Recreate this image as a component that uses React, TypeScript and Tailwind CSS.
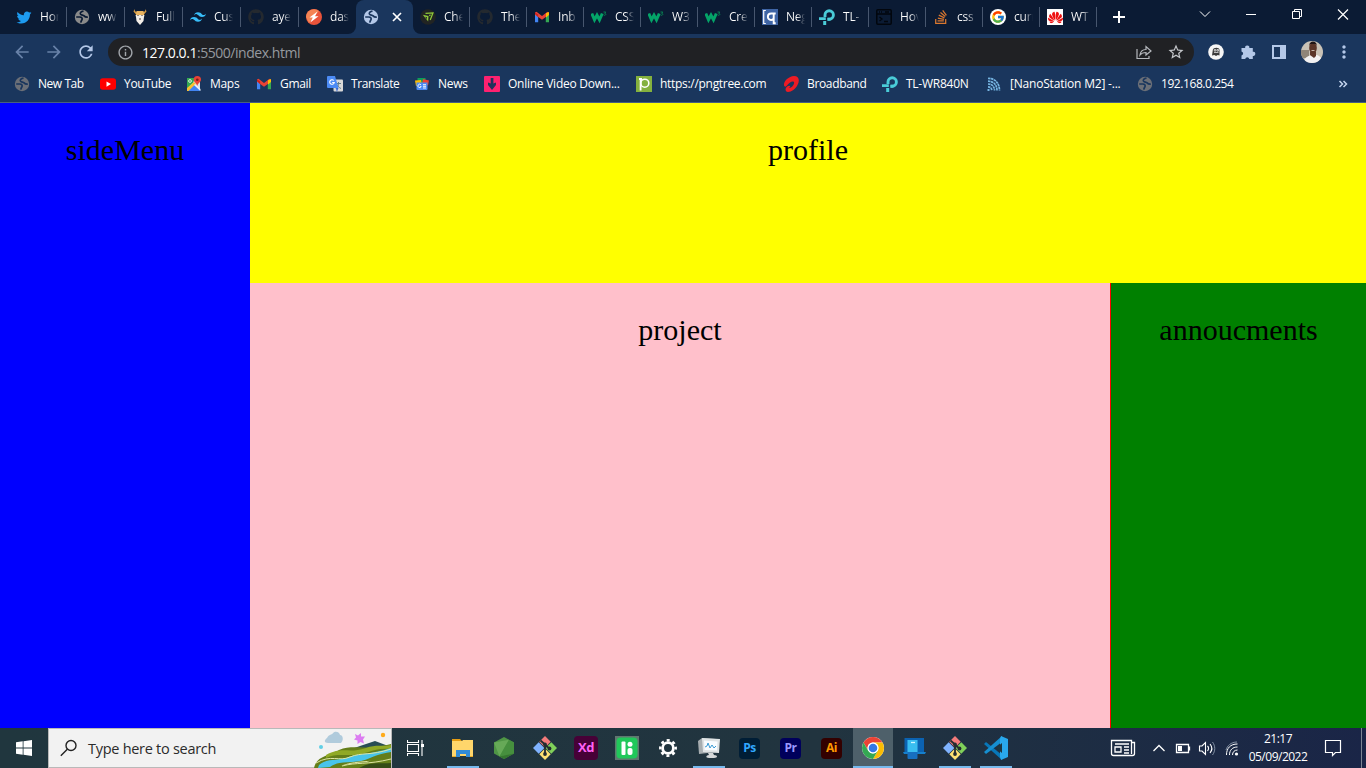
import React, { ReactNode } from "react";
import { FaGithub, FaStackOverflow, FaTwitter } from "react-icons/fa";
import { FcGoogle } from "react-icons/fc";
import { SiHuawei, SiTailwindcss } from "react-icons/si";
import { MdArrowBack, MdArrowForward, MdInfoOutline, MdMoreVert, MdRefresh, MdStarBorder } from "react-icons/md";

const S = ({ children, box = "0 0 16 16", c = "h-4 w-4" }: { children: ReactNode; box?: string; c?: string }) => (
  <svg viewBox={box} className={`shrink-0 ${c}`} fill="none">{children}</svg>
);

const Globe = ({ c = "text-[#8a8a8a]", land = "#0b1b34" }: { c?: string; land?: string }) => (
  <S c={`h-4 w-4 ${c}`}>
    <circle cx="8" cy="8" r="7.200" fill="currentColor" />
    <path d="M9.500 2.200C7 2.600 5.600 4 6.600 5.300c.9 1.100 2.600.5 3.500 1.600.8 1 2.200 1.300 3.700 1.200" stroke={land} strokeWidth="1.700" />
    <path d="M2.200 8h3.600c2 .1 2.500 1.100 2.300 2.300-.2 1-1 1.300-1.300 3.400" stroke={land} strokeWidth="1.700" />
  </S>
);

const Gmail = () => (
  <S>
    <path d="M1 4v9.200h3.200V7z" fill="#4285f4" />
    <path d="M15 4v9.200h-3.200V7z" fill="#34a853" />
    <path d="M1 3.500 2.500 2.700 8 7l5.500-4.300L15 3.800 11.800 8 8 10.800 4.200 8 1 5.800z" fill="#ea4335" />
    <path d="M12 4.200 15 3v3l-3 2.500z" fill="#fbbc04" />
    <path d="M1 5v-1.500L4.200 5.500V8.300z" fill="#c5221f" />
  </S>
);
const TpLink = () => (
  <S>
    <path d="M6 8V6a4.200 4.200 0 1 1 4.200 4.200H8.500" stroke="#4accd8" strokeWidth="2.900" />
    <path d="M0 8.200h6.800V11H0zM4.200 12h3v4h-3z" fill="#4accd8" />
    <path d="M8.500 8.800h3v2.900h-3z" fill="#4accd8" />
  </S>
);
const W3 = () => (
  <S>
    <path d="M.8 4.500 3.500 10.800 6 6.200 8.500 10.800 11.300 4.500" stroke="#04a468" strokeWidth="3" />
    <path d="M12.500 3h2.300l-1.100 1.400c1.800.1 1.400 2.200-.9 1.900" stroke="#087d50" strokeWidth="1" />
  </S>
);
const Goat = () => (
  <S>
    <path d="M2.500 0c0 2 1 3 3 3.500h5c2-.5 3-1.500 3-3.500l1 2.500-3 3.500h-7L1.500 2.500z" fill="#d59a42" />
    <path d="M4.500 2h7l.8 5h-8.600z" fill="#e9b35f" />
    <path d="M3.700 6h8.600l-.8 6L8 16l-3.500-4z" fill="#f3eee8" />
    <path d="M5.500 6h1v1h-1zM9.500 6h1v1h-1zM7 9.500h2v1H7z" fill="#45352f" />
  </S>
);
const Bolt = () => (
  <S>
    <circle cx="8" cy="8" r="8" fill="#e9533a" /><path d="M0 8a8 8 0 0 1 13-6L3 14z" fill="#f48454" />
    <path d="m11.500 2.500-8 6h3.300l-2.500 5 8.200-6.200H9z" fill="#fff" />
  </S>
);
const Chevrons = () => (
  <S>
    <circle cx="8" cy="8" r="7.800" fill="#222423" />
    <path d="M2.800 5.800 8.500 7 8.200 12.500z" fill="#8fc93a" /><path d="m5 7.800 2 .5v2z" fill="#222423" />
    <path d="M5.500 4.300 13 3.800 10.200 11M9.300 6.800l1.200-1" stroke="#8fc93a" strokeWidth="1.200" />
  </S>
);
const QLetter = () => (
  <S>
    <path d="M0 0h16v16H0z" fill="#3f65a5" />
    <path d="M3.800 1.500H1.700v13h2.100" stroke="#fff" strokeWidth="1.200" />
    <path d="M13.700 4.500H9.200C4.800 4.500 4.800 11 9 11c1.800 0 2.700-.8 2.700-2.500V5v9.300h2" stroke="#fff" strokeWidth="1.900" />
  </S>
);
const Terminal = () => (
  <S><rect x=".8" y=".8" width="14.400" height="14.400" rx="1" stroke="#02060d" strokeWidth="1.500" /><path d="M1 5h14M3 3h1m1 0h1m3 0h4M3.500 8 6 10l-2.500 2M8 12.500h4" stroke="#02060d" strokeWidth="1.300" /></S>
);
const GoogleG = () => <span className="grid h-4 w-4 shrink-0 place-items-center rounded-full bg-white"><FcGoogle className="h-[14px] w-[14px]" /></span>;
const Huawei = () => <span className="grid h-4 w-4 shrink-0 place-items-center bg-white"><SiHuawei className="h-[15px] w-[15px] text-[#ee1111]" /></span>;
const YouTube = () => <S><rect y="2.300" width="16" height="11.500" rx="2.800" fill="#ff0000" /><path d="m6.500 5.500 4.500 2.600-4.500 2.600z" fill="#fff" /></S>;
const Maps = () => (
  <S>
    <path d="M1 2h13v13H1z" fill="#d9e1e6" /><path d="M1 2h8l-2 5-6 6z" fill="#35a853" />
    <path d="m1 12 7-6 2 2-7 7H1z" fill="#fbc02d" /><path d="m2.500 15 6-6 6 6z" fill="#4184f3" /><path d="m9 8 5.500 5v2L8 9z" fill="#edf0f2" />
    <circle cx="4" cy="5" r="1.400" stroke="#fff" strokeWidth=".8" />
    <path d="M11.300 0A3.700 3.700 0 0 0 7.700 3.700c0 2.500 2.800 3 3.500 6.300.8-3.300 3.800-3.800 3.800-6.300A3.700 3.700 0 0 0 11.300 0" fill="#ea4335" /><circle cx="11.300" cy="3.700" r="1.300" fill="#7d1f19" />
  </S>
);
const Translate = () => (
  <S>
    <rect x="6.500" y="3.500" width="9.500" height="12" rx="1" fill="#d8d8d8" /><path d="M8.500 7.500H14M11.500 6v1.500c0 2-1 3.500-2.500 5M10 8.500c1 2 2 3 4 4" stroke="#607d8b" />
    <path d="M1 0h7l3.500 12H1a1 1 0 0 1-1-1V1a1 1 0 0 1 1-1" fill="#4c8bf5" /><path d="M9 12h2.500L9.800 16z" fill="#3367d6" />
    <path d="M6.800 4.500a2.300 2.300 0 1 0 .5 2H5.200" stroke="#fff" strokeWidth="1.100" />
  </S>
);
const News = () => (
  <S>
    <path d="M3.500 2h8v5h-8z" fill="#0f9d58" /><path d="m1 4.500 6-.5 1 5-6 1z" fill="#fbbc04" /><path d="m9 3 6 1.500-1 5L8 8z" fill="#ea4335" />
    <path d="M2.500 6.500h11v6.500a1 1 0 0 1-1 1h-9a1 1 0 0 1-1-1z" fill="#4c8bf5" /><path d="M7 8.900a1.700 1.700 0 1 0 .2 1.700H6M9 8.700h3M9 10.300h3M9 12h3" stroke="#fff" strokeWidth=".9" />
  </S>
);
const Video = () => <S><rect width="16" height="16" rx="1" fill="#fe2170" /><path d="M6.700 2h2.700v5.500L12 6.500v2.500l-4 5-4-5V6.500l2.700 1z" fill="#20325b" /></S>;
const Pngtree = () => <S><path d="M0 0h16v16H0z" fill="#84b13e" /><circle cx="8.800" cy="7.200" r="4" stroke="#fff" strokeWidth="1.600" /><path d="M4.600 3v11.500M3 3h3" stroke="#fff" strokeWidth="1.800" /></S>;
const Airtel = () => <S><path d="M1 9.500C.5 5 5.500.5 11 0c5 0 6 4.500 3.500 9-2 4-6 7-9.500 7-3.500-.4-3.300-5.200 1-6.200 1.700-.1 1.500 1.700-.3 2.300 3 .3 6.300-4.600 5.200-6.200C9.500 4.500 6 6.500 4 9.500c-1.200 1.500-2.500 1.500-3 0" fill="#ed1b24" /></S>;
const Nano = () => (
  <S><path d="M2 2.500c6.500-.5 11.500 4.500 11.500 12M2 5.200c5.500 0 9 3.500 9 9.300M2 8c3.800 0 6.500 2.500 6.500 6.500M2 10.800c2.300 0 3.800 1.500 3.800 3.700" stroke="#76b5e2" strokeWidth="1.700" strokeDasharray="2.500 .5" /><path d="M1.500 13h2v2h-2z" fill="#76b5e2" /></S>
);

const tabs: { icon: ReactNode; text: string; kind?: "active" | "plain" }[] = [
  { icon: <FaTwitter className="h-[15px] w-4 shrink-0 text-[#1d9bf0]" />, text: "Hor" },
  { icon: <Globe />, text: "ww" },
  { icon: <Goat />, text: "Full" },
  { icon: <SiTailwindcss className="h-4 w-4 shrink-0 text-[#38bdf8]" />, text: "Cus" },
  { icon: <FaGithub className="h-4 w-4 shrink-0 text-[#24292f]" />, text: "aye" },
  { icon: <Bolt />, text: "das", kind: "plain" },
  { icon: <Globe c="text-[#b4c8e8]" land="#1a365d" />, text: "", kind: "active" },
  { icon: <Chevrons />, text: "Che" },
  { icon: <FaGithub className="h-4 w-4 shrink-0 text-[#24292f]" />, text: "The" },
  { icon: <Gmail />, text: "Inb" },
  { icon: <W3 />, text: "CSS" },
  { icon: <W3 />, text: "W3" },
  { icon: <W3 />, text: "Cre" },
  { icon: <QLetter />, text: "Neg" },
  { icon: <TpLink />, text: "TL-" },
  { icon: <Terminal />, text: "Hov" },
  { icon: <FaStackOverflow className="h-4 w-4 shrink-0 text-[#d9772f]" />, text: "css" },
  { icon: <GoogleG />, text: "curr" },
  { icon: <Huawei />, text: "WT" },
];

const uiFont = "font-['Segoe_UI','Open_Sans','Noto_Sans',sans-serif]";

function TabStrip() {
  return (
    <div className="flex h-[34px] bg-[#0b1b34] pl-[9px]">
      {tabs.map((t, i) => {
        const size = i < 5 ? "w-[58px]" : "w-[57px]";
        if (t.kind === "active")
          return (
            <div key={i} className={`relative flex h-full items-center rounded-t-lg bg-[#1a365d] pl-[7px] ${size}`}>
              {t.icon}
              <svg viewBox="0 0 10 10" className="ml-[13px] h-[10px] w-[10px]"><path d="m1 1 8 8M9 1 1 9" stroke="#fff" strokeWidth="1.700" /></svg>
              <svg viewBox="0 0 8 8" className="absolute bottom-0 -left-2 h-2 w-2"><path d="M8 0v8H0a8 8 0 0 0 8-8" fill="#1a365d" /></svg>
              <svg viewBox="0 0 8 8" className="absolute -right-2 bottom-0 h-2 w-2"><path d="M0 0v8h8a8 8 0 0 1-8-8" fill="#1a365d" /></svg>
            </div>
          );
        return (
          <div key={i} className={`flex h-full shrink-0 items-center ${size}`}>
            <div className={`flex h-5 w-full items-center gap-2 pl-[7px] ${t.kind === "plain" ? "" : "border-r border-[#47566e]"}`}>
              {t.icon}
              <span className="w-[19px] overflow-hidden bg-gradient-to-r from-white from-55% to-transparent bg-clip-text text-[12px] leading-5 tracking-[-0.2px] whitespace-nowrap text-transparent">{t.text}</span>
            </div>
          </div>
        );
      })}
      <svg viewBox="0 0 269 34" className="h-[34px] w-[269px]" fill="none" stroke="#fff">
        <path d="M22 11v12M16 17h12" strokeWidth="2" />
        <path d="m103 11.500 5 5 5-5" strokeWidth="1" /><path d="M149 14.500h10" />
        <path d="M195.500 11.500h7v7h-7zM197.500 11.500v-2h7v7h-2" /><path d="m241 9.500 10 10M251 9.500l-10 10" strokeWidth="1.200" />
      </svg>
    </div>
  );
}

function AddressBar() {
  return (
    <div className="flex h-9 items-center text-[#b4c8e8]">
      <div className="flex w-[108px] shrink-0 items-center gap-3 pl-3">
        <MdArrowBack className="h-5 w-5 text-[#6882a8]" /><MdArrowForward className="h-5 w-5 text-[#6882a8]" /><MdRefresh className="h-5 w-5" />
      </div>
      <div className="flex h-7 w-[1086px] shrink-0 items-center rounded-full bg-[#202124] pr-[9px] pl-[9px]">
        <MdInfoOutline className="h-[17px] w-[17px] text-[#a2a6ab]" />
        <p className="ml-2 text-[14px] tracking-[-0.46px] text-[#969a9f]"><span className="text-white">127.0.0.1</span>:5500/index.html</p>
        <svg viewBox="0 0 16 16" className="ml-auto h-4 w-4" fill="none" stroke="#b5b8bd" strokeWidth="1.200"><path d="M1 5v9.500h12V12M4 11c.5-4 3-5.500 6-5.500V2.500L15 7l-5 4V8.500c-3 0-4.500.5-6 2.500Z" /></svg>
        <MdStarBorder className="ml-[15px] h-[18px] w-[18px] text-[#c4c7cb]" />
      </div>
      <S c="ml-[14px] h-4 w-4">
        <circle cx="8" cy="8" r="7.800" fill="#f6f6f6" />
        <path d="M4 11.500 4.800 6C5.200 3 11.500 2.800 11.500 6v5.500L9.800 11 8 12l-1.700-1z" fill="#3b3b3b" />
        <path d="M6.300 5.500h1.500v1.600H6.300zM9 5.500h1.500v1.600H9zM6 8.500h4.500" stroke="#f6f6f6" strokeWidth=".7" />
      </S>
      <S c="ml-4 h-4 w-4"><path d="M1.500 4h3.700a2.100 2.100 0 1 1 4.100 0h3.500v3.800a2.100 2.100 0 1 1 0 4.100V15H9.300a2.100 2.100 0 0 0-4.100 0H1.500v-3.500a2.100 2.100 0 0 0 0-4.100z" fill="currentColor" /></S>
      <S c="ml-4 h-[14px] w-[14px]" box="0 0 14 14"><path d="M0 0h14v14H0zM2 2v10h6V2z" fill="currentColor" fillRule="evenodd" /></S>
      <S c="ml-[15px] h-[22px] w-[22px] rounded-full" box="0 0 22 22">
        <path d="M0 0h22v22H0z" fill="#c9c2b6" /><path d="M0 9h8v8H0z" fill="#8f8578" /><path d="M3 22c0-5 3-7 8-8l5 0c3 1 5 3 6 8z" fill="#f2f1f2" />
        <path d="m9 11 6 0v4l-2 2-4-3z" fill="#5c3529" /><ellipse cx="12" cy="7" rx="3.800" ry="5.500" fill="#5b3527" /><path d="M8 5c0-6 8-6 8 0l-1-2H9z" fill="#211615" /><path d="M10.500 9.500h3" stroke="#ded2c8" strokeWidth=".8" />
      </S>
      <MdMoreVert className="ml-[11px] h-5 w-5" />
    </div>
  );
}

const bookmarks: { icon: ReactNode; text: string; cell: string; track: string }[] = [
  { icon: <Globe c="text-[#6b6f77]" land="#1a365d" />, text: "New Tab", cell: "w-[86px]", track: "tracking-[-0.45px]" },
  { icon: <YouTube />, text: "YouTube", cell: "w-[86px]", track: "tracking-[-0.3px]" },
  { icon: <Maps />, text: "Maps", cell: "w-[70px]", track: "tracking-[-0.3px]" },
  { icon: <Gmail />, text: "Gmail", cell: "w-[71px]", track: "tracking-[-0.3px]" },
  { icon: <Translate />, text: "Translate", cell: "w-[87px]", track: "tracking-[-0.4px]" },
  { icon: <News />, text: "News", cell: "w-[70px]", track: "tracking-[-0.3px]" },
  { icon: <Video />, text: "Online Video Down...", cell: "w-[152px]", track: "tracking-[-0.25px]" },
  { icon: <Pngtree />, text: "https://pngtree.com", cell: "w-[147px]", track: "tracking-[-0.3px]" },
  { icon: <Airtel />, text: "Broadband", cell: "w-[99px]", track: "tracking-[-0.35px]" },
  { icon: <TpLink />, text: "TL-WR840N", cell: "w-[104px]", track: "tracking-[-0.25px]" },
  { icon: <Nano />, text: "[NanoStation M2] -...", cell: "w-[151px]", track: "tracking-[-0.2px]" },
  { icon: <Globe c="text-[#6b6f77]" land="#1a365d" />, text: "192.168.0.254", cell: "w-[150px]", track: "tracking-[-0.43px]" },
];

function Bookmarks() {
  return (
    <div className="flex h-[33px] items-center border-b border-[#48607f] pb-[5px] pl-[14px] text-[12px] text-white">
      {bookmarks.map((b) => (
        <div key={b.text} className={`flex shrink-0 items-center gap-2 whitespace-nowrap ${b.cell}`}>{b.icon}<span className={b.track}>{b.text}</span></div>
      ))}
      <svg viewBox="0 0 10 8" className="mr-[18px] ml-auto h-2 w-[10px]" fill="none" stroke="#c3d4ee" strokeWidth="1.500"><path d="m1.500 1 3 3-3 3M5.500 1l3 3-3 3" /></svg>
    </div>
  );
}

const T = ({ children }: { children: ReactNode }) => <S box="0 0 24 24" c="h-6 w-6">{children}</S>;
const Git = () => (
  <T>
    <path d="m12 0 5.700 5.700L12 11.400 6.300 5.700z" fill="#f47b7b" /><path d="M5.700 6.300 11.400 12l-5.700 5.700L0 12z" fill="#80b3ff" /><path d="M18.300 6.300 24 12l-5.700 5.700-5.700-5.700z" fill="#80d05a" /><path d="m12 12.600 5.700 5.700L12 24l-5.700-5.700z" fill="#ffe173" />
    <path d="m7.500 4.500 4.500 4v9.500M12 9l4.500 3.500" stroke="#242c30" strokeWidth="1.800" /><circle cx="12" cy="8.500" r="1.900" fill="#242c30" /><circle cx="12" cy="18" r="1.900" fill="#242c30" /><circle cx="16.500" cy="12.500" r="1.900" fill="#242c30" />
  </T>
);
const Explorer = () => <T><path d="M1 3h8l2 2h-10z" fill="#e69d13" /><path d="M1 5h10l1-1h10v16H1z" fill="#ffd66b" /><path d="M5 14h14v7h-4v-3H9v3H5z" fill="#318bd6" /><path d="M1 20h4v1H1zM19 20h3v1h-3z" fill="#e9aa27" /></T>;
const Node = () => <T><path d="m12 1 10 5.500v11L12 23 2 17.500v-11z" fill="#4f9545" /><path d="m2 6.500 15-2.700L7.500 20.500z" fill="#66a957" /><path d="m17 3.800 5 2.700v11L7.500 20.500z" fill="#468f3e" /><path d="m7.500 20.500 14.500-3L12 23z" fill="#35762f" /></T>;
const Green = () => <T><path d="M0 0h24v24H0z" fill="#5f786f" /><rect x="1.500" y="1.500" width="21" height="21" rx="4" fill="#20c85a" /><rect x="6.500" y="5.500" width="4" height="13.500" rx="1" fill="#fff" /><circle cx="15" cy="8.300" r="2.500" fill="#fff" /><rect x="12.500" y="12" width="5" height="7" rx="2" fill="#fff" /></T>;
const Gear = () => <T><circle cx="12" cy="12" r="5.400" stroke="#fff" strokeWidth="2.800" /><circle cx="12" cy="12" r="7.700" stroke="#fff" strokeWidth="2.500" strokeDasharray="3.020 3.020" strokeDashoffset="1.510" /></T>;
const Monitor = () => (
  <T><path d="m1 5 4-3 14 1v13L2 18z" fill="#a7adb0" /><path d="m5 2 18 1-1 14-16-1z" fill="#dfe3e4" /><path d="m7 4.500 13.500 1-.5 9L7.500 14z" fill="#f9fcff" /><path d="m8 11 2-1 1-3 2 5 2-3 2 3 2-2" stroke="#3b9bd4" strokeWidth="1" /><path d="m11 17 5 0 1 2c4 0 4 3 0 3h-5c-4 0-3-3 0-3z" fill="#d5d8d9" /></T>
);
const Chrome = () => (
  <T><circle cx="12" cy="12" r="11" fill="#fff" /><path d="M2.500 6.500A11 11 0 0 1 21.500 6.500H12a5.500 5.500 0 0 0-4.800 8.200z" fill="#ea4335" /><path d="M21.500 6.500A11 11 0 0 1 12 23l4.800-8.300A5.500 5.500 0 0 0 12 6.500z" fill="#fbbc04" /><path d="M12 23A11 11 0 0 1 2.500 6.500l4.700 8.200a5.500 5.500 0 0 0 9.600 0z" fill="#34a853" /><circle cx="12" cy="12" r="5.400" fill="#fff" /><circle cx="12" cy="12" r="4.300" fill="#3478e5" /></T>
);
const Phone = () => <T><path d="M2.500 2H22v15H2.500z" fill="#0b62b1" /><path d="M1 16h7v2H2zM15 16h9l-1 2h-8z" fill="#1680cd" /><path d="M5.500 4h10v18a1 1 0 0 1-1 1h-8a1 1 0 0 1-1-1z" fill="#176fc0" /><path d="M5.500 4h10v12h-10z" fill="#39bdf0" /><path d="M9 6.500h4" stroke="#d0f5ff" strokeWidth="1.300" /></T>;
const VsCode = () => <T><path d="m0 8 2-2 16 13v5z" fill="#0877b9" /><path d="m0 16 2 2L18 6V0z" fill="#168fd1" /><path d="m17 0 7 3v18l-7 3-1-3V3z" fill="#29a8ec" /><path d="M18 7v10l-6-5z" fill="#1d3641" /></T>;
const Adobe = ({ text, c }: { text: string; c: string }) => <span className={`grid place-items-center rounded font-bold tracking-[-0.5px] ${c}`}>{text}</span>;

const apps: { icon: ReactNode; open?: boolean; active?: boolean }[] = [
  { icon: <Explorer />, open: true },
  { icon: <Node /> },
  { icon: <Git /> },
  { icon: <Adobe text="Xd" c="h-6 w-6 bg-[#470137] text-[13px] text-[#ff61f6]" /> },
  { icon: <Green /> },
  { icon: <Gear /> },
  { icon: <Monitor />, open: true },
  { icon: <Adobe text="Ps" c="mr-px h-[21px] w-[21px] bg-[#001e36] text-[12px] text-[#31a8ff]" /> },
  { icon: <Adobe text="Pr" c="mr-px h-[21px] w-[21px] bg-[#00005b] text-[12px] text-[#9999ff]" /> },
  { icon: <Adobe text="Ai" c="mr-px h-[21px] w-[21px] bg-[#330000] text-[12px] text-[#ff9a00]" /> },
  { icon: <Chrome />, active: true },
  { icon: <Phone /> },
  { icon: <Git />, open: true },
  { icon: <VsCode />, open: true },
];

const Landscape = () => (
  <svg viewBox="0 0 77 39" className="ml-auto h-[39px] w-[77px]">
    <path d="M13 9c2-4 5-3 6-5 3-3 7 0 7 2 3 0 4 5 1 8H14c-4 0-4-3-1-5" fill="#b0cbdc" />
    <path d="m41 5 3 1.500 3-2.500 0 3.500 4 0-2 3 1 4-3.500-1.500-3 2 0-3.500-3.500-1 2-2z" fill="#dc7cf1" /><circle cx="69" cy="6" r="2.200" fill="#ffac1c" /><circle cx="7" cy="18" r="2" fill="#61cfe5" />
    <path d="m32 22 14-5 15-5 16 6v20H32z" fill="#294e55" /><path d="M0 39c3-13 14-11 25-18 14-6 25 1 52-6v24z" fill="#647d19" />
    <path d="M12 26c17-9 22-1 40-7 10-4 17-1 25-3v4c-18-2-24 6-39 6-12 0-18-1-26 3" fill="#90a925" />
    <path d="M5 36c8-7 18-4 27-7 10-5 24-3 45-10v4c-12 2-16 4-21 6-14 7-30 1-40 9L4 39z" fill="#48c4ea" />
    <path d="M2 34c15-9 23-1 34-6 12-5 20-1 41-8M24 39c13-8 30-5 53-9" fill="none" stroke="#e0e7a4" strokeWidth="1" />
    <path d="M18 39c19-7 27 0 39-8l20-2v10z" fill="#658019" /><path d="M28 37c14-4 25-1 49-7" fill="none" stroke="#dbe3a0" /><path d="M45 39c12-7 20-4 32-5v5z" fill="#354d16" />
  </svg>
);

function Taskbar() {
  return (
    <div className="flex h-10 bg-gradient-to-r from-[#20363e] via-[#21343f] via-60% to-[#1a2547] text-white">
      <div className="grid w-12 shrink-0 place-items-center"><S><path d="m0 2.300 6.700-1v6.300H0zm7.500-1.100L16 0v7.600H7.500zM0 8.400h6.700v6.300l-6.700-1zm7.500 0H16V16l-8.500-1.200z" fill="#fff" /></S></div>
      <div className="flex w-[344px] shrink-0 items-center border border-[#b9b9b9] bg-[#f2f2f2] pl-[11px] text-[#2b2b2b]">
        <svg viewBox="0 0 18 18" className="h-[18px] w-[18px]" fill="none" stroke="#222" strokeWidth="1.400"><circle cx="11" cy="6.500" r="5" /><path d="m7.300 10.200-6.500 6.500" /></svg>
        <span className="ml-[10px] pt-px text-[14.500px] tracking-[-0.28px]">Type here to search</span>
        <Landscape />
      </div>
      <div className="grid w-[51px] shrink-0 place-items-center">
        <svg viewBox="0 0 17 16" className="-ml-1 h-4 w-[17px]" fill="none" stroke="#fff" strokeWidth="1.100"><path d="M.5 0v2.500h11V0M.5 4.500h11v7H.5zM.5 16v-2.500h11V16M15 0v16" /><path d="M14 4h3v3h-3z" fill="#fff" stroke="none" /></svg>
      </div>
      <div className="flex gap-px">
        {apps.map((a, i) => (
          <div key={i} className={`flex h-10 w-10 flex-col items-center ${a.active ? "bg-[#4e606a]" : ""}`}>
            <div className="grid h-[38px] place-items-center pt-[2px]">{a.icon}</div>
            <div className={`h-[2px] ${a.active ? "w-10 bg-[#76b9ed]" : a.open ? "w-8 bg-[#76b9ed]" : "w-8"}`} />
          </div>
        ))}
      </div>
      <svg viewBox="0 0 132 40" className="ml-auto h-10 w-[132px] shrink-0" fill="none" stroke="#fff" strokeWidth="1.300">
        <path d="M4.500 12.500h19v2h3v11a2 2 0 0 1-2 2h-19a2 2 0 0 1-2-2v-13zM23.500 15v11M7 16h14M16 19h5M16 22h5M7 19h6v5H7zM16 25h5" />
        <path d="m45.500 23 5.500-5.500 5.500 5.500M68.500 16.500h12v8h-12zM81.500 18.500v4" /><path d="M70 18h4v5h-4z" fill="#fff" stroke="none" />
        <path d="M91.500 18h2.500l3.500-3.500v12L94 23h-2.500zM99.500 18c1.500 1.500 1.500 3 0 5M102 16c2.500 3 2.500 6 0 9" strokeWidth="1.100" /><path d="M104.500 14c3 4 3 9 0 13" stroke="#8290a4" strokeWidth="1" />
        <path d="M118.500 27c0-7 4-11 11-11M121.500 27c0-5 3-8 8-8M124.500 27c0-3 2-5 5-5" strokeWidth="1" /><path d="M118 22c1-4 5-8 11-8" stroke="#8290a4" strokeWidth="1" /><circle cx="128.500" cy="26" r="1.600" fill="#fff" stroke="none" />
      </svg>
      <div className="flex w-[76px] shrink-0 flex-col items-center pt-[2px] text-[12px] leading-[18px] tracking-[-0.5px]"><span>21:17</span><span>05/09/2022</span></div>
      <svg viewBox="0 0 50 40" className="h-10 w-[50px] shrink-0" fill="none" stroke="#fff" strokeWidth="1.200"><path d="M9.500 12.500h15v12h-5l-3 3v-3h-7z" /><path d="M45.500 0v40" stroke="#7c8594" strokeWidth="1" /></svg>
    </div>
  );
}

export default function App() {
  return (
    <div className={`flex h-[768px] w-[1366px] flex-col overflow-hidden ${uiFont}`}>
      <header className="h-[103px] shrink-0 bg-[#1a365d]"><TabStrip /><AddressBar /><Bookmarks /></header>
      <main className="flex min-h-0 flex-1 text-center font-['Liberation_Serif',serif] text-[30px] leading-[34px] text-black">
        <aside className="w-[250px] bg-[#0000ff] pt-[30px]">sideMenu</aside>
        <div className="flex flex-1 flex-col">
          <section className="h-[180px] bg-[#ffff00] pt-[30px]">profile</section>
          <div className="flex flex-1 bg-[#ff0000]">
            <section className="mr-px w-[860px] bg-[#ffc0cb] pt-[30px]">project</section>
            <section className="flex-1 bg-[#008000] pt-[30px]">annoucments</section>
          </div>
        </div>
      </main>
      <Taskbar />
    </div>
  );
}
